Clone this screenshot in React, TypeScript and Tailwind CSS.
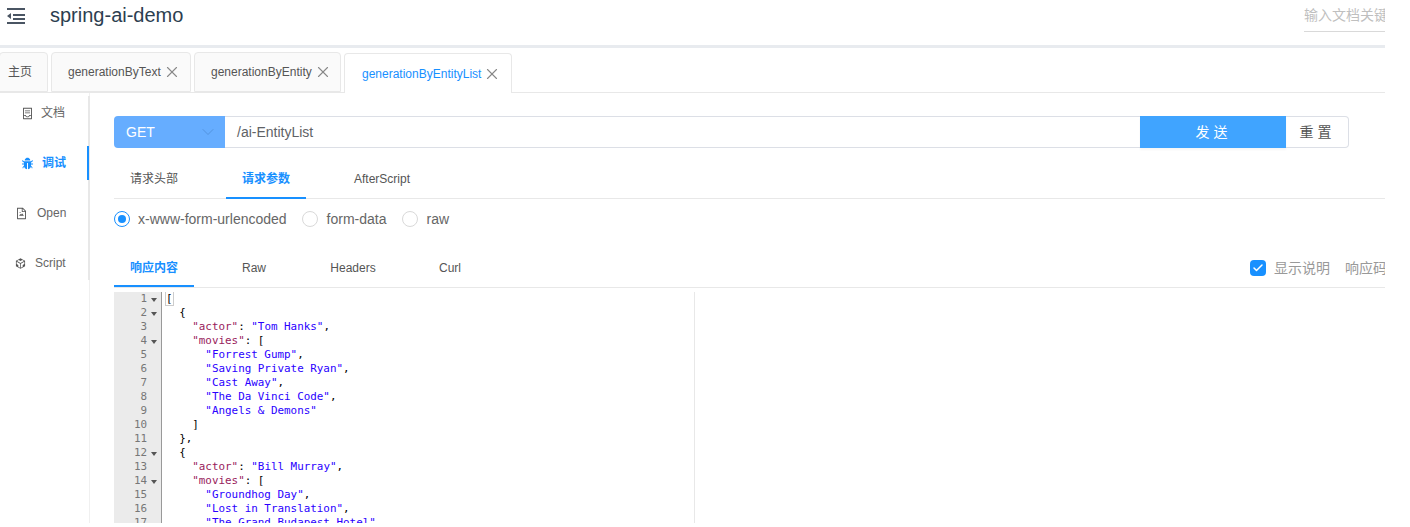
import React from "react";
import { Check, ChevronDown, X } from "lucide-react";
import { AiFillBug, AiOutlineCodeSandbox, AiOutlineContainer, AiOutlineFileImage } from "react-icons/ai";

const sans = "font-['Liberation_Sans','Noto_Sans_CJK_SC',sans-serif]";

const tabs = [
  { label: "generationByText", width: "w-[140px]" },
  { label: "generationByEntity", width: "w-[147px]" },
];

const lines: { fold?: boolean; indent: number; parts: [string, string][] }[] = [
  { fold: true, indent: 0, parts: [["[", "text-black outline outline-[#ccc]"]] },
  { fold: true, indent: 2, parts: [["{", "text-black"]] },
  { indent: 4, parts: [['"actor"', "text-[#991b5c]"], [": ", "text-black"], ['"Tom Hanks"', "text-[#2a00ff]"], [",", "text-black"]] },
  { fold: true, indent: 4, parts: [['"movies"', "text-[#991b5c]"], [": [", "text-black"]] },
  { indent: 6, parts: [['"Forrest Gump"', "text-[#2a00ff]"], [",", "text-black"]] },
  { indent: 6, parts: [['"Saving Private Ryan"', "text-[#2a00ff]"], [",", "text-black"]] },
  { indent: 6, parts: [['"Cast Away"', "text-[#2a00ff]"], [",", "text-black"]] },
  { indent: 6, parts: [['"The Da Vinci Code"', "text-[#2a00ff]"], [",", "text-black"]] },
  { indent: 6, parts: [['"Angels & Demons"', "text-[#2a00ff]"]] },
  { indent: 4, parts: [["]", "text-black"]] },
  { indent: 2, parts: [["},", "text-black"]] },
  { fold: true, indent: 2, parts: [["{", "text-black"]] },
  { indent: 4, parts: [['"actor"', "text-[#991b5c]"], [": ", "text-black"], ['"Bill Murray"', "text-[#2a00ff]"], [",", "text-black"]] },
  { fold: true, indent: 4, parts: [['"movies"', "text-[#991b5c]"], [": [", "text-black"]] },
  { indent: 6, parts: [['"Groundhog Day"', "text-[#2a00ff]"], [",", "text-black"]] },
  { indent: 6, parts: [['"Lost in Translation"', "text-[#2a00ff]"], [",", "text-black"]] },
  { indent: 6, parts: [['"The Grand Budapest Hotel"', "text-[#2a00ff]"]] },
];

function SideItem({ icon, label, active, className, labelClass }: { icon: React.ReactNode; label: string; active?: boolean; className: string; labelClass: string }) {
  return (
    <div className={`-mr-px flex h-[34px] items-center border-r-2 text-xs ${active ? "border-[#1890ff] font-bold text-[#1890ff]" : "border-transparent text-[#666]"} ${className}`}>
      <span className="flex w-[15px] justify-center">{icon}</span>
      <span className={labelClass}>{label}</span>
    </div>
  );
}

function UnderTab({ label, active, className }: { label: string; active?: boolean; className: string }) {
  return (
    <div className={`-mb-px flex items-center justify-center border-b-2 text-xs ${active ? "border-[#1890ff] font-bold text-[#1890ff]" : "border-transparent text-[#555]"} ${className}`}>
      {label}
    </div>
  );
}

function Radio({ label, active }: { label: string; active?: boolean }) {
  return (
    <div className="flex items-center">
      <span className={`flex size-4 items-center justify-center rounded-full border ${active ? "border-[#1890ff]" : "border-[#d9d9d9]"}`}>
        {active && <span className="size-2 rounded-full bg-[#1890ff]" />}
      </span>
      <span className={`text-sm text-[#666] ${active ? "ml-2" : "ml-[9px]"}`}>{label}</span>
    </div>
  );
}

export default function App() {
  return (
    <div className={`h-[523px] w-[1385px] overflow-hidden bg-white ${sans}`}>
      {/* Header */}
      <div className="box-content flex h-[45px] items-start border-b-[3px] border-[#e8ebef]">
        <svg className="ml-[7px] mt-[8px]" width="18" height="16" viewBox="0 0 18 16" fill="#4a5563">
          <path d="M0 0h18v2H0zM6 6h12v2H6zM6 10h12v2H6zM0 14h18v2H0zM4 5v6L0 8z" />
        </svg>
        <span className="ml-[25px] mt-[1px] text-[20px] leading-[28px] text-[#2c3e50]">spring-ai-demo</span>
        <div className="ml-auto mt-[5px] h-[27px] w-[81px] overflow-hidden whitespace-nowrap border-b border-[#d9d9d9] text-sm leading-[20px] text-[#bfbfbf]">
          输入文档关键字
        </div>
      </div>

      {/* Tab bar */}
      <div className="mt-[5px] flex h-[40px] items-end gap-[3px] border-b border-[#e8e8e8] text-xs">
        <div className="-ml-px flex h-[40px] w-[49px] items-center rounded-t border border-[#e8e8e8] bg-[#fafafa] pl-[8px] text-[#555]">主页</div>
        {tabs.map((tab) => (
          <div key={tab.label} className={`flex h-[40px] items-center rounded-t border border-[#e8e8e8] bg-[#fafafa] pl-[16px] text-[#555] ${tab.width}`}>
            {tab.label}
            <X className="ml-[2px] size-[18px] text-[#888]" strokeWidth={1.5} />
          </div>
        ))}
        <div className="-mb-px flex h-[40px] w-[168px] items-center rounded-t border border-b-0 border-[#e8e8e8] bg-white pl-[17px] text-[#1890ff]">
          generationByEntityList
          <X className="ml-[2px] size-[18px] text-[#888]" strokeWidth={1.5} />
        </div>
      </div>

      <div className="flex">
        {/* Sidebar */}
        <div className="h-[430px] w-[90px] shrink-0 border-r border-[#f0f0f0]">
          <div className="-mr-px mt-[3px] flex flex-col border-r-2 border-[#e8e8e8]">
            <SideItem icon={<AiOutlineContainer className="size-[13px] text-[#555]" />} label="文档" className="mb-[16px] pl-[20px]" labelClass="ml-[6px]" />
            <SideItem icon={<AiFillBug className="size-[13px] text-[#1890ff]" />} label="调试" active className="mb-[16px] pl-[20px]" labelClass="ml-[7px]" />
            <SideItem icon={<AiOutlineFileImage className="size-[13px] text-[#555]" />} label="Open" className="mb-[16px] pl-[14px]" labelClass="ml-[8px]" />
            <SideItem icon={<AiOutlineCodeSandbox className="size-[13px] text-[#555]" />} label="Script" className="pl-[13px]" labelClass="ml-[7px]" />
          </div>
        </div>

        {/* Main */}
        <div className="min-w-0 flex-1 pt-[23px]">
          <div className="ml-[24px] mr-[36px] flex h-[32px] text-sm">
            <div className="flex w-[111px] items-center rounded-l bg-[#66adff] pl-[12px] pr-[7px] text-white">
              GET
              <ChevronDown className="ml-auto size-[20px] text-[#4e8fd8]" strokeWidth={1} />
            </div>
            <div className="flex flex-1 items-center border-y border-[#dcdfe6] pl-[12px] text-[#606266]">/ai-EntityList</div>
            <div className="flex w-[146px] items-center justify-center bg-[#40a4ff] pl-px tracking-[4px] text-white shadow-[0_2px_2px_rgba(0,0,0,0.04)]">发送</div>
            <div className="flex w-[63px] items-center justify-center rounded-r border border-l-0 border-[#dcdfe6] pl-px tracking-[4px] text-[#555]">重置</div>
          </div>

          <div className="ml-[24px] mt-[12px] flex border-b border-[#e8e8e8]">
            <UnderTab label="请求头部" className="h-[39px] w-[80px]" />
            <UnderTab label="请求参数" active className="ml-[32px] h-[39px] w-[80px]" />
            <UnderTab label="AfterScript" className="ml-[40px] h-[39px] w-[72px]" />
          </div>

          <div className="ml-[24px] mt-[10px] flex h-[20px] gap-[15px]">
            <Radio label="x-www-form-urlencoded" active />
            <Radio label="form-data" />
            <Radio label="raw" />
          </div>

          <div className="ml-[24px] mt-[20px] flex border-b border-[#e8e8e8]">
            <UnderTab label="响应内容" active className="h-[38px] w-[80px] pt-[2px]" />
            <UnderTab label="Raw" className="ml-[32px] h-[38px] w-[56px] pt-[2px]" />
            <UnderTab label="Headers" className="ml-[37px] h-[38px] w-[68px] pt-[2px]" />
            <UnderTab label="Curl" className="ml-[40px] h-[38px] w-[46px] pt-[2px]" />
            <div className="ml-auto flex h-[38px] items-center overflow-hidden text-sm text-[#999]">
              <span className="flex size-4 items-center justify-center rounded-sm bg-[#1890ff]">
                <Check className="size-3 text-white" strokeWidth={3} />
              </span>
              <span className="ml-2">显示说明</span>
              <span className="ml-[15px] w-[40px] shrink-0 overflow-hidden whitespace-nowrap">响应码</span>
            </div>
          </div>

          {/* Code editor */}
          <div className="ml-[24px] mt-[4px] flex h-[231px] w-[581px] overflow-hidden border-r border-[#e8e8e8] font-['DejaVu_Sans_Mono',monospace] text-[10.9px] leading-[14px]">
            <div className="w-[47px] shrink-0 bg-[#ebebeb] text-[#777]">
              {lines.map((line, i) => (
                <div key={i} className="flex h-[14px] justify-end">
                  <span>{i + 1}</span>
                  <span className="flex w-[14px] items-center justify-center">
                    {line.fold && <span className="mt-px size-0 border-x-[3px] border-t-[4px] border-x-transparent border-t-[#555]" />}
                  </span>
                </div>
              ))}
            </div>
            <div className="border-l border-[#999] pl-[4px]">
              {lines.map((line, i) => (
                <div key={i} className="h-[14px] whitespace-pre">
                  {" ".repeat(line.indent)}
                  {line.parts.map(([text, color], j) => (
                    <span key={j} className={color}>{text}</span>
                  ))}
                </div>
              ))}
            </div>
          </div>
        </div>
      </div>
    </div>
  );
}
